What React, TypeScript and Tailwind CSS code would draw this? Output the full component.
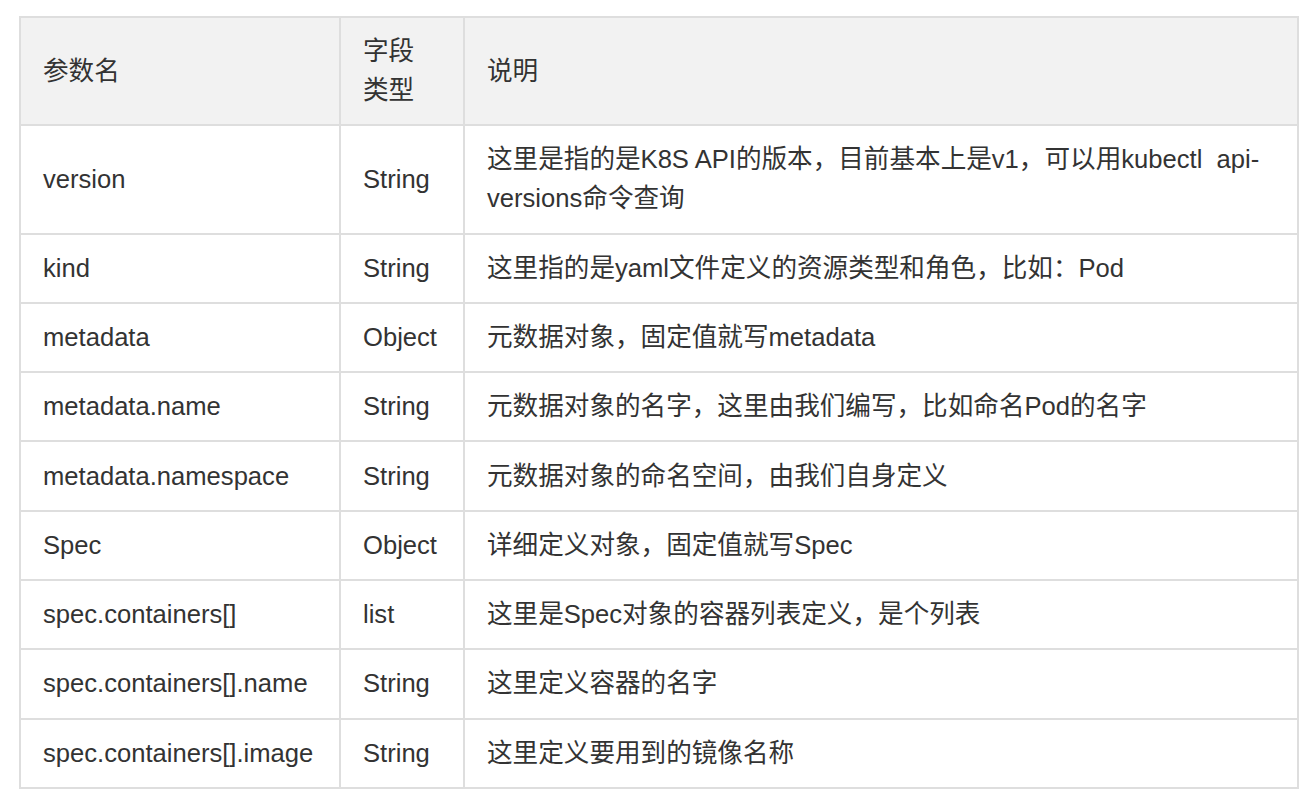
const rows: [string, string, React.ReactNode][] = [
  [
    "version",
    "String",
    <>
      这里是指的是K8S API的版本，目前基本上是v1，可以用kubectl&nbsp; api-
      <br />
      versions命令查询
    </>,
  ],
  ["kind", "String", "这里指的是yaml文件定义的资源类型和角色，比如：Pod"],
  ["metadata", "Object", "元数据对象，固定值就写metadata"],
  ["metadata.name", "String", "元数据对象的名字，这里由我们编写，比如命名Pod的名字"],
  ["metadata.namespace", "String", "元数据对象的命名空间，由我们自身定义"],
  ["Spec", "Object", "详细定义对象，固定值就写Spec"],
  ["spec.containers[]", "list", "这里是Spec对象的容器列表定义，是个列表"],
  ["spec.containers[].name", "String", "这里定义容器的名字"],
  ["spec.containers[].image", "String", "这里定义要用到的镜像名称"],
];

const cell = "border-2 border-[#dedede] px-[22px] py-[14.15px] text-left align-middle font-normal";

export default function App() {
  return (
    <div
      className="min-h-screen bg-white pt-[16px] pl-[19px] text-[25.6px] leading-[39px] text-[#333333]"
      style={{ fontFamily: '"Liberation Sans", "Noto Sans CJK SC", sans-serif' }}
    >
      <table className="w-[1278px] table-fixed border-collapse">
        <colgroup>
          <col className="w-[320px]" />
          <col className="w-[124px]" />
          <col className="w-[834px]" />
        </colgroup>
        <thead>
          <tr className="bg-[#f2f2f2]">
            <th className={cell}>参数名</th>
            <th className={cell}>
              字段
              <br />
              类型
            </th>
            <th className={cell}>说明</th>
          </tr>
        </thead>
        <tbody>
          {rows.map(([name, type, desc], i) => (
            <tr key={i}>
              <td className={cell}>{name}</td>
              <td className={cell}>{type}</td>
              <td className={cell}>{desc}</td>
            </tr>
          ))}
        </tbody>
      </table>
    </div>
  );
}
